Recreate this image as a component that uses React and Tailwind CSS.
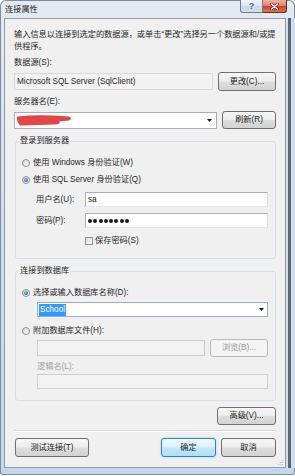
import React from 'react';

const Btn = ({ children, w, h = 'h-[19px]', kind = 'normal' }) => {
  const look = {
    normal: 'border-[#707070] bg-[linear-gradient(#f6f6f6,#ececec_48%,#dedede_52%,#d2d2d2)] text-[#1e1e1e]',
    primary: 'border-[#3c7fb1] bg-[linear-gradient(#eef8fe,#dcf1fc_48%,#c3e7fc_52%,#ade0f8)] text-[#1e1e1e] shadow-[0_0_2px_#8ccbf0]',
    disabled: 'border-[#b5b9bc] bg-[#f4f4f4] text-[#9a9a9a]',
  }[kind];
  return (
    <div className={`flex shrink-0 items-center justify-center rounded-[3px] border ${look} ${w} ${h}`}>
      {children}
    </div>
  );
};

const Arrow = () => (
  <svg width="5" height="3" viewBox="0 0 5 3">
    <path d="M0 0h5L2.5 3z" fill="#1a1a1a" />
  </svg>
);

const Radio = ({ checked = false }) => (
  <span className="flex h-[8px] w-[8px] shrink-0 items-center justify-center rounded-full border border-[#8b9097] bg-[linear-gradient(135deg,#d9d9d9,#fbfbfb)]">
    {checked && <span className="h-[4px] w-[4px] rounded-full bg-[radial-gradient(circle_at_40%_35%,#8cbbe4,#1f4f7d)]" />}
  </span>
);

export default function App() {
  return (
    <div className="h-[476px] w-[295px] bg-white font-['Liberation_Sans','Noto_Sans_CJK_SC',sans-serif] text-[8.2px] leading-[12px] text-[#262626]">
      <div className="flex h-[475px] w-[295px] flex-col overflow-hidden rounded-t-[6px] rounded-b-[3px] bg-[linear-gradient(#e3eaf2,#d5e1ed_40%,#c4d7ea)] shadow-[inset_0_0_0_1px_#7d8c9c]">
        {/* title bar */}
        <div className="flex h-[18px] shrink-0 items-start justify-between">
          <span className="pl-[5px] pt-[4px] text-[#1e1e1e]">连接属性</span>
          <div className="mr-[8px] flex">
            <div className="flex h-[13px] w-[23px] items-center justify-center rounded-bl-[3px] border border-t-0 border-[#6b7a8b] bg-[linear-gradient(#f1f5f9,#dde5ee_50%,#cbd6e2_51%,#d8e2ec)] text-[9px] leading-none font-bold text-[#5b6570]">
              ?
            </div>
            <div className="flex h-[13px] w-[24px] items-center justify-center rounded-br-[3px] border border-l-0 border-t-0 border-[#6b2a1e] bg-[linear-gradient(#eeb2a4,#de7e67_50%,#c7442a_51%,#d97457)]">
              <svg width="9" height="7" viewBox="0 0 9 7">
                <path d="M1.5 1l6 5M7.5 1l-6 5" stroke="#5a1c12" strokeWidth="2.6" strokeLinecap="round" />
                <path d="M1.5 1l6 5M7.5 1l-6 5" stroke="#ffffff" strokeWidth="1.4" strokeLinecap="round" />
              </svg>
            </div>
          </div>
        </div>

        <div className="flex h-[450px] shrink-0">
          <div className="w-[4px]" />
          <div className="relative flex w-[282px] flex-col border border-[#8d9cac] bg-[#f0f0f0] px-[9px] pt-[10px]">
            <p className="whitespace-nowrap">
              输入信息以连接到选定的数据源，或单击“更改”选择另一个数据源和/或提
              <br />
              供程序。
            </p>

            <div className="mt-[4px]">数据源(S):</div>
            <div className="mt-[3px] flex h-[19px] items-center gap-[5px]">
              <div className="flex h-[17px] flex-1 items-center border border-[#d9d9d9] bg-[#f2f2f2] pl-[2px]">
                Microsoft SQL Server (SqlClient)
              </div>
              <Btn w="w-[58px]">更改(C)...</Btn>
            </div>

            <div className="mt-[5px]">服务器名(E):</div>
            <div className="mt-[3px] flex h-[18px] items-center gap-[5px]">
              <div className="flex h-[17px] flex-1 items-center justify-between border border-[#abadb3] bg-white pl-[1px] pr-[4px]">
                <svg width="56" height="12" viewBox="0 0 56 12">
                  <path d="M1 2.5Q18 0.5 38 1.5L53 2.5Q57 4.5 53 6.5L43 7.5Q46 10 39 10.5L4 11.5Q0 7 1 2.5Z" fill="#e34646" />
                </svg>
                <Arrow />
              </div>
              <Btn w="w-[54px]" h="h-[18px]">刷新(R)</Btn>
            </div>

            {/* login group */}
            <fieldset className="mt-[6px] ml-[1px] rounded-[3px] border border-[#d5dfe5]">
              <legend className="ml-[3px] px-[1px]">登录到服务器</legend>
              <div className="flex flex-col pt-[10px] pb-[11px] pl-[6px] pr-[7px]">
                <div className="flex h-[12px] items-center gap-[3px]">
                  <Radio />
                  <span>使用 Windows 身份验证(W)</span>
                </div>
                <div className="mt-[5px] flex h-[12px] items-center gap-[3px]">
                  <Radio checked />
                  <span>使用 SQL Server 身份验证(Q)</span>
                </div>
                <div className="mt-[6px] flex h-[15px] items-center">
                  <span className="ml-[14px] w-[49px]">用户名(U):</span>
                  <div className="flex h-[15px] flex-1 items-center border border-[#abadb3] border-b-[#e3e9ef] border-r-[#dbdfe6] bg-white pl-[2px]">
                    sa
                  </div>
                </div>
                <div className="mt-[6px] flex h-[15px] items-center">
                  <span className="ml-[14px] w-[49px]">密码(P):</span>
                  <div className="flex h-[15px] flex-1 items-center gap-[1.3px] border border-[#abadb3] border-b-[#e3e9ef] border-r-[#dbdfe6] bg-white pl-[2px]">
                    {[0, 1, 2, 3, 4, 5, 6, 7].map((i) => (
                      <span key={i} className="h-[4px] w-[4px] rounded-full bg-[#1a1a1a]" />
                    ))}
                  </div>
                </div>
                <div className="mt-[7px] flex h-[12px] items-center gap-[2px]">
                  <span className="ml-[63px] h-[8px] w-[8px] border border-[#8f8f8f] bg-[linear-gradient(135deg,#dcdcdc,#fbfbfb)]" />
                  <span>保存密码(S)</span>
                </div>
              </div>
            </fieldset>

            {/* database group */}
            <fieldset className="mt-[6px] ml-[1px] rounded-[3px] border border-[#d5dfe5]">
              <legend className="ml-[3px] px-[1px]">连接到数据库</legend>
              <div className="flex flex-col pt-[10px] pb-[11px] pl-[6px] pr-[7px]">
                <div className="flex h-[12px] items-center gap-[3px]">
                  <Radio checked />
                  <span>选择或输入数据库名称(D):</span>
                </div>
                <div className="mt-[3px] ml-[15px] flex h-[15px] items-center justify-between border border-[#8fb0d6] bg-white pl-[1px] pr-[3px]">
                  <span className="bg-[#3399ff] px-[1px] text-white">School</span>
                  <Arrow />
                </div>
                <div className="mt-[8px] flex h-[12px] items-center gap-[3px]">
                  <Radio />
                  <span>附加数据库文件(H):</span>
                </div>
                <div className="mt-[2px] ml-[15px] flex h-[18px] items-center gap-[5px]">
                  <div className="h-[16px] flex-1 border border-[#cfcfcf] bg-[#f3f3f3]" />
                  <Btn w="w-[58px]" h="h-[18px]" kind="disabled">浏览(B)...</Btn>
                </div>
                <div className="mt-[4px] ml-[15px] text-[#a0a0a0]">逻辑名(L):</div>
                <div className="mt-[1px] ml-[15px] h-[15px] border border-[#cfcfcf] bg-[#f3f3f3]" />
              </div>
            </fieldset>

            <div className="mt-[6px] flex justify-end">
              <Btn w="w-[59px]" h="h-[18px]">高级(V)...</Btn>
            </div>

            <div className="mt-[5px] h-[2px] border-t border-b border-t-[#d5d5d5] border-b-white" />

            <div className="mt-[6px] flex h-[19px] items-center">
              <div className="ml-[1px]">
                <Btn w="w-[74px]">测试连接(T)</Btn>
              </div>
              <div className="flex-1" />
              <Btn w="w-[55px]" kind="primary">确定</Btn>
              <div className="ml-[5px]">
                <Btn w="w-[55px]">取消</Btn>
              </div>
            </div>

            <svg className="absolute bottom-[1px] right-[1px]" width="7" height="7" viewBox="0 0 7 7">
              <rect x="5" y="1" width="1" height="1" fill="#b9c0c8" />
              <rect x="3" y="3" width="1" height="1" fill="#b9c0c8" />
              <rect x="5" y="3" width="1" height="1" fill="#b9c0c8" />
              <rect x="1" y="5" width="1" height="1" fill="#b9c0c8" />
              <rect x="3" y="5" width="1" height="1" fill="#b9c0c8" />
              <rect x="5" y="5" width="1" height="1" fill="#b9c0c8" />
            </svg>
          </div>
          <div className="flex w-[9px]">
            <div className="w-[2px] bg-[#d5dfe9]" />
            <div className="w-[3px] bg-[#5a6672]" />
            <div className="w-[4px] bg-[#cddff1]" />
          </div>
        </div>

        <div className="h-[7px] shrink-0" />
      </div>
    </div>
  );
}
